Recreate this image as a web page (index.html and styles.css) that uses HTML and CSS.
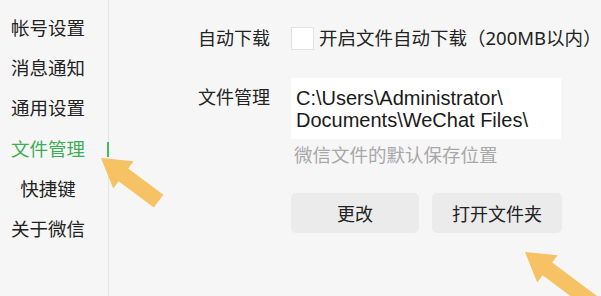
FILE: index.html
```html
<!DOCTYPE html>
<html lang="zh">
<head>
<meta charset="utf-8">
<link rel="stylesheet" href="styles.css">
</head>
<body>
<div class="app">
  <nav class="sidebar">
    <div class="nav-item">帐号设置</div>
    <div class="nav-item">消息通知</div>
    <div class="nav-item">通用设置</div>
    <div class="nav-item active">文件管理</div>
    <div class="nav-item">快捷键</div>
    <div class="nav-item">关于微信</div>
  </nav>
  <main class="content">
    <div class="row row-auto">
      <div class="label">自动下载</div>
      <label class="check-line"><span class="checkbox"></span><span>开启文件自动下载（200MB以内）</span></label>
    </div>
    <div class="row row-path">
      <div class="label">文件管理</div>
      <div class="path-col">
        <div class="path-box">
          <div class="path-line">C:\Users\Administrator\</div>
          <div class="path-line">Documents\WeChat Files\</div>
        </div>
        <div class="hint">微信文件的默认保存位置</div>
        <div class="buttons">
          <button class="btn">更改</button>
          <button class="btn">打开文件夹</button>
        </div>
      </div>
    </div>
  </main>
</div>
<svg class="arrows" width="601" height="296" viewBox="0 0 601 296">
  <polygon class="arrow" points="101,158 133.6,161.2 128.2,168.4 163.4,194.8 153.8,207.6 118.6,181.2 113.2,188.4"/>
  <polygon class="arrow" points="525,252 557.6,255.2 552.2,262.4 611.4,306.8 601.8,319.6 542.6,275.2 537.2,282.4"/>
</svg>
</body>
</html>
```
FILE: styles.css
```css
html, body {
  margin: 0;
  padding: 0;
  background: #f6f6f6;
  width: 601px;
  height: 296px;
  overflow: hidden;
  font-family: "Noto Sans", "Noto Sans CJK SC", sans-serif;
  color: #222;
}
.app {
  display: flex;
  height: 296px;
}
.sidebar {
  width: 109px;
  flex: none;
  border-right: 1px solid #e4e4e4;
  box-sizing: border-box;
  padding-top: 8px;
  display: flex;
  flex-direction: column;
}
.nav-item {
  position: relative;
  width: 76px;
  margin-left: 10px;
  text-align: center;
  font-size: 18.5px;
  line-height: 40px;
  height: 40.2px;
  color: #222;
  white-space: nowrap;
}
.nav-item.active {
  color: #3cae55;
}
.nav-item.active::after {
  content: "";
  position: absolute;
  left: 97px;
  top: 13px;
  width: 2px;
  height: 15px;
  background: #3cbf5c;
}
.content {
  padding-left: 89px;
  padding-top: 24px;
  flex: 1;
}
.row {
  display: flex;
  align-items: flex-start;
}
.label {
  width: 93px;
  flex: none;
  font-size: 18px;
  line-height: 28px;
  white-space: nowrap;
}
.check-line {
  display: flex;
  align-items: center;
  gap: 5px;
  font-size: 18.5px;
  line-height: 28px;
  white-space: nowrap;
}
.checkbox {
  width: 21px;
  height: 21px;
  background: #fff;
  border: 1px solid #e2e2e2;
  flex: none;
}
.row-path {
  margin-top: 31px;
}
.path-col {
  display: flex;
  flex-direction: column;
}
.path-box {
  margin-top: -5px;
  width: 270px;
  height: 61px;
  box-sizing: border-box;
  background: #fff;
  padding: 9px 5px 0;
  color: #1a1a1a;
}
.path-line {
  font-family: "Liberation Sans", "Noto Sans", sans-serif;
  font-size: 20px;
  line-height: 22px;
  height: 22px;
  white-space: nowrap;
}
.hint {
  margin-top: 4px;
  padding-left: 3px;
  font-size: 18.5px;
  line-height: 24px;
  color: #a8a8a8;
}
.buttons {
  display: flex;
  gap: 13px;
  margin-top: 26px;
}
.btn {
  width: 128px;
  height: 40px;
  border: none;
  border-radius: 5px;
  background: #ebebeb;
  font-family: inherit;
  font-size: 18px;
  color: #222;
  padding: 0;
}
.btn + .btn {
  width: 130px;
}
.arrows {
  position: absolute;
  left: 0;
  top: 0;
  pointer-events: none;
}
.arrow {
  fill: #f7c263;
}
```
